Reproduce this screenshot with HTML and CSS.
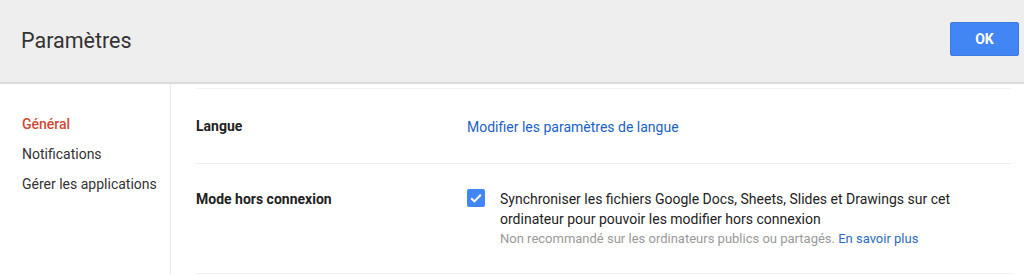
FILE: index.html
```html
<!DOCTYPE html>
<html lang="fr">
<head>
<meta charset="utf-8">
<title>Paramètres</title>
<link rel="stylesheet" href="styles.css">
</head>
<body>
<header class="header">
  <h1 class="title">Paramètres</h1>
  <button class="ok">OK</button>
</header>
<div class="main">
  <nav class="sidebar">
    <a class="nav-item active">Général</a>
    <a class="nav-item">Notifications</a>
    <a class="nav-item">Gérer les applications</a>
  </nav>
  <section class="content">
    <div class="row row-lang">
      <div class="label">Langue</div>
      <div class="value"><a class="link">Modifier les paramètres de langue</a></div>
    </div>
    <div class="row row-offline">
      <div class="label">Mode hors connexion</div>
      <div class="value check-row">
        <span class="checkbox">
          <svg width="18" height="18" viewBox="0 0 18 18"><path d="M4.2 9.3 L7.4 12.4 L13.8 5.8" fill="none" stroke="#fff" stroke-width="2"/></svg>
        </span>
        <div class="check-text">
          <div class="main-text">Synchroniser les fichiers Google Docs, Sheets, Slides et Drawings sur cet<br>ordinateur pour pouvoir les modifier hors connexion</div>
          <div class="sub-text">Non recommandé sur les ordinateurs publics ou partagés. <a class="link">En savoir plus</a></div>
        </div>
      </div>
    </div>
  </section>
</div>
</body>
</html>
```
FILE: styles.css
```css
* { box-sizing: border-box; }
html, body { margin: 0; padding: 0; background: #fff; }
body { font-family: Roboto, "Noto Sans", Arial, sans-serif; color: #222; }

.header {
  height: 84px;
  background: #eeeeee;
  border-bottom: 2px solid #dcdcdc;
  display: flex;
  align-items: center;
  justify-content: space-between;
  padding: 0 5px 2px 21px;
}
.title {
  margin: 0;
  font-size: 21.5px;
  font-weight: 400;
  color: #333;
}
.ok {
  width: 69px;
  height: 34px;
  margin-top: -2px;
  background: #4285f4;
  border: 1px solid #3d7ae0;
  border-radius: 2px;
  color: #fff;
  font-family: Roboto, Arial, sans-serif;
  font-size: 14px;
  font-weight: 700;
}

.main { display: flex; }
.sidebar {
  width: 171px;
  border-right: 1px solid #ebebeb;
  padding: 25px 0 0 22px;
  display: flex;
  flex-direction: column;
  height: 191px;
}
.nav-item {
  font-size: 14px;
  line-height: 30px;
  color: #333;
}
.nav-item.active { color: #d14836; font-weight: 500; }

.content {
  flex: 1;
  padding: 4px 13px 0 25px;
}
.row {
  display: flex;
  border-bottom: 1px solid #efefef;
}
.row-lang {
  border-top: 1px solid #f4f4f4;
  height: 76px;
  align-items: center;
}
.row-offline { padding: 25px 0 25px; }
.label {
  width: 271px;
  font-size: 14px;
  font-weight: 700;
  color: #222;
  line-height: 20px;
}
.link { color: #1a62c7; font-size: 14px; }
.check-row { display: flex; gap: 15px; }
.checkbox {
  width: 18px;
  height: 18px;
  border-radius: 2px;
  background: #4285f4;
  display: block;
}
.checkbox svg { display: block; }
.main-text { font-size: 14px; line-height: 20px; color: #222; }
.sub-text { font-size: 13px; line-height: 18px; color: #999; margin-top: 1px; }
.sub-text .link { font-size: 13px; color: #2a6bc4; }
```
